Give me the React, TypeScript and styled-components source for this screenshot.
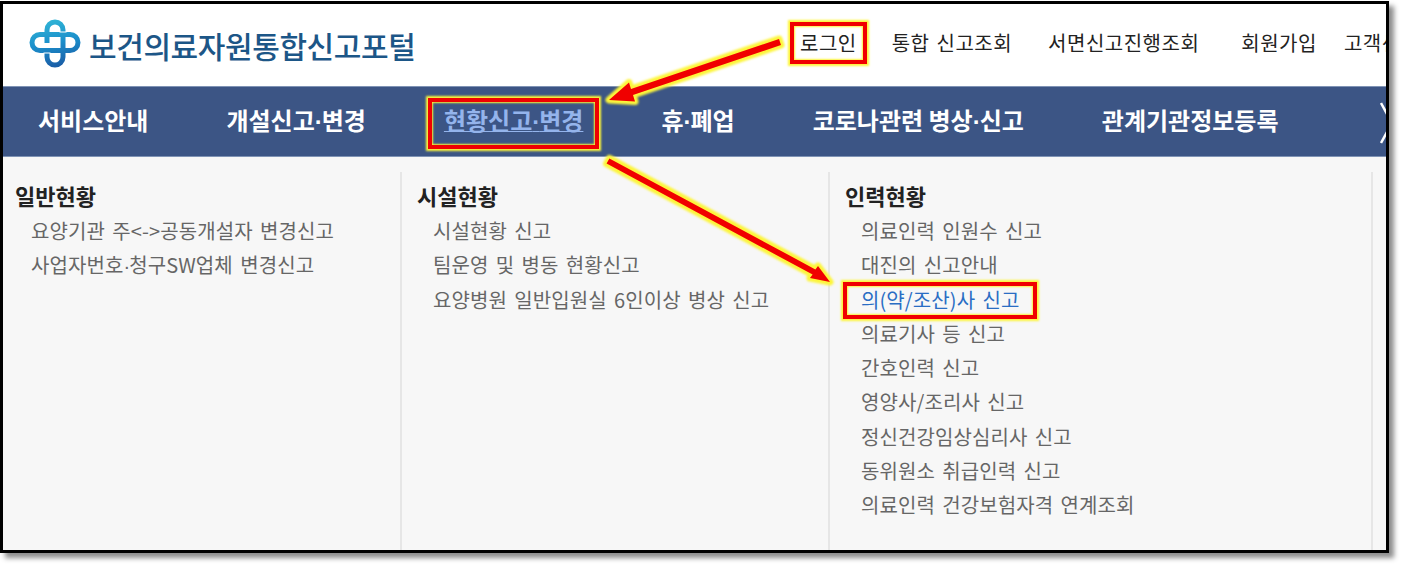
import styled, { createGlobalStyle } from 'styled-components';

const GlobalStyle = createGlobalStyle`
  html, body {
    margin: 0;
    padding: 0;
    background: #fff;
  }
  body {
    font-family: "Noto Sans CJK KR", "Noto Sans", sans-serif;
  }
`;

const Page = styled.div`
  position: relative;
  width: 1405px;
  height: 568px;
  overflow: hidden;
  padding-top: 1px;
  box-sizing: border-box;
`;

const Frame = styled.div`
  width: 1389px;
  height: 552px;
  box-sizing: border-box;
  border: 3px solid #000;
  background: #f7f7f7;
  box-shadow: 5px 5px 5px rgba(0, 0, 0, 0.45);
  overflow: hidden;
  display: flex;
  flex-direction: column;
`;

const Header = styled.header`
  height: 82px;
  flex: none;
  background: #fff;
  display: flex;
  align-items: center;
  padding-left: 26px;
  white-space: nowrap;
`;

const Logo = styled.div`
  width: 771px;
  flex: none;
  display: flex;
  align-items: center;
  gap: 8px;
`;

const LogoText = styled.span`
  font-size: 30px;
  font-weight: 500;
  letter-spacing: -0.4px;
  color: #1c5687;
`;

const TopLinks = styled.nav`
  display: flex;
  align-items: center;
  margin-top: -6px;
`;

const TopLink = styled.a<{ $left: number }>`
  position: relative;
  margin-left: ${(p) => p.$left}px;
  font-size: 20px;
  letter-spacing: 0.5px;
  word-spacing: 2px;
  color: #222;
  flex: none;
`;

const MainNav = styled.nav`
  height: 71px;
  flex: none;
  background: #3c5585;
  border-top: 1px solid #7f93b5;
  border-bottom: 1px solid #7f93b5;
  box-sizing: border-box;
  display: flex;
  align-items: center;
  gap: 78px;
  padding: 0 0 4px 35px;
  white-space: nowrap;
  position: relative;
`;

const NavItem = styled.a<{ $active?: boolean }>`
  position: relative;
  font-size: 24px;
  font-weight: 700;
  color: ${(p) => (p.$active ? '#94b4ec' : '#fff')};
  text-decoration: ${(p) => (p.$active ? 'underline' : 'none')};
  text-decoration-thickness: 1px;
  flex: none;
`;

const Dot = styled.span`
  font-family: "Liberation Sans", sans-serif;
  letter-spacing: -1px;
`;

const NavChevron = styled.svg`
  position: absolute;
  right: -8px;
  top: 15px;
`;

const Panel = styled.div`
  flex: 1;
  display: flex;
  padding-top: 15px;
  min-height: 0;
`;

const Column = styled.section<{ $width: number; $pad: number; $divider?: boolean }>`
  width: ${(p) => p.$width}px;
  flex: none;
  box-sizing: border-box;
  padding-left: ${(p) => p.$pad}px;
  padding-top: 6px;
  border-left: ${(p) => (p.$divider ? '2px solid #e6e6e6' : '0')};
`;

const LastRule = styled.div`
  width: 2px;
  background: #e6e6e6;
`;

const ColumnTitle = styled.h3`
  margin: 0 0 2px;
  font-size: 22px;
  font-weight: 700;
  line-height: 34px;
  color: #222;
`;

const ItemList = styled.ul`
  list-style: none;
  margin: 0;
  padding: 0 0 0 16px;
`;

const Item = styled.li<{ $active?: boolean }>`
  position: relative;
  width: max-content;
  font-size: 20px;
  line-height: 34.3px;
  letter-spacing: 0.1px;
  word-spacing: 2.7px;
  white-space: nowrap;
  color: ${(p) => (p.$active ? '#2a6dc4' : '#666')};
`;

const RedBox = styled.span<{ $x: number; $top: number; $bottom: number }>`
  position: absolute;
  left: -${(p) => p.$x}px;
  right: -${(p) => p.$x}px;
  top: -${(p) => p.$top}px;
  bottom: -${(p) => p.$bottom}px;
  border: 4px solid #f00000;
  box-shadow: 0 0 2px 2px #fdf53a, inset 0 0 2px 1px #fdf53a;
  pointer-events: none;
`;

const Arrows = styled.svg`
  position: absolute;
  left: 0;
  top: 0;
  pointer-events: none;
`;

const columns = [
  {
    title: '일반현황',
    width: 397,
    pad: 12,
    divider: false,
    items: ['요양기관 주<->공동개설자 변경신고', '사업자번호·청구SW업체 변경신고'],
  },
  {
    title: '시설현황',
    width: 428,
    pad: 15,
    divider: true,
    items: ['시설현황 신고', '팀운영 및 병동 현황신고', '요양병원 일반입원실 6인이상 병상 신고'],
  },
  {
    title: '인력현황',
    width: 543,
    pad: 15,
    divider: true,
    items: [
      '의료인력 인원수 신고',
      '대진의 신고안내',
      '의(약/조산)사 신고',
      '의료기사 등 신고',
      '간호인력 신고',
      '영양사/조리사 신고',
      '정신건강임상심리사 신고',
      '동위원소 취급인력 신고',
      '의료인력 건강보험자격 연계조회',
    ],
  },
];

const topLinks = [
  { label: '통합 신고조회', left: 35 },
  { label: '서면신고진행조회', left: 36 },
  { label: '회원가입', left: 42 },
  { label: '고객센터', left: 27 },
];

const withDots = (text: string) =>
  text.split('·').map((part, i) => (
    <span key={part}>
      {i > 0 && <Dot>·</Dot>}
      {part}
    </span>
  ));

const LogoMark = () => (
  <svg width="52" height="52" viewBox="0 0 52 52" fill="none">
    <defs>
      <linearGradient id="knot" gradientUnits="userSpaceOnUse" x1="0" y1="0" x2="10" y2="50">
        <stop offset="0" stopColor="#35bcd8" />
        <stop offset="0.55" stopColor="#1b8fcb" />
        <stop offset="1" stopColor="#1a5fa8" />
      </linearGradient>
    </defs>
    <rect x="3" y="15.5" width="46" height="16" rx="8" stroke="url(#knot)" strokeWidth="5" />
    <path d="M18 24 V11 a8 8 0 0 1 16 0 V38 a8 8 0 0 1 -16 0 V31.5" stroke="url(#knot)" strokeWidth="5" />
    <path d="M14.5 34 H21.5 M30.5 13 H37.5" stroke="#fff" strokeWidth="1.2" />
  </svg>
);

export default function App() {
  return (
    <>
      <GlobalStyle />
      <Page>
        <Frame>
          <Header>
            <Logo>
              <LogoMark />
              <LogoText>보건의료자원통합신고포털</LogoText>
            </Logo>
            <TopLinks>
              <TopLink $left={0}>
                로그인
                <RedBox $x={10} $top={6} $bottom={7} />
              </TopLink>
              {topLinks.map((link) => (
                <TopLink key={link.label} $left={link.left}>
                  {link.label}
                </TopLink>
              ))}
            </TopLinks>
          </Header>
          <MainNav>
            <NavItem>서비스안내</NavItem>
            <NavItem>{withDots('개설신고·변경')}</NavItem>
            <NavItem $active>
              {withDots('현황신고·변경')}
              <RedBox $x={16} $top={4} $bottom={12} />
            </NavItem>
            <NavItem>{withDots('휴·폐업')}</NavItem>
            <NavItem>{withDots('코로나관련 병상·신고')}</NavItem>
            <NavItem>관계기관정보등록</NavItem>
            <NavChevron width="14" height="42" viewBox="0 0 14 42" fill="none">
              <path d="M1 1 L12 21 L1 41" stroke="#fff" strokeWidth="2.5" />
            </NavChevron>
          </MainNav>
          <Panel>
            {columns.map((col) => (
              <Column key={col.title} $width={col.width} $pad={col.pad} $divider={col.divider}>
                <ColumnTitle>{col.title}</ColumnTitle>
                <ItemList>
                  {col.items.map((item) => (
                    <Item key={item} $active={item.startsWith('의(약')}>
                      {withDots(item)}
                      {item.startsWith('의(약') && <RedBox $x={18} $top={1} $bottom={2} />}
                    </Item>
                  ))}
                </ItemList>
              </Column>
            ))}
            <LastRule />
          </Panel>
        </Frame>
        <Arrows width="1405" height="568" viewBox="0 0 1405 568">
          <defs>
            <filter id="glow" x="-20%" y="-20%" width="140%" height="140%">
              <feGaussianBlur stdDeviation="1" />
            </filter>
            <polygon id="arrow-a" points="779,39 631,89 629,82.5 609,100 635,101.5 633,95 781,45" />
            <polygon id="arrow-b" points="609.4,158.4 815.4,269.4 818,266 830,282 810,278 812.6,274.6 606.6,163.6" />
          </defs>
          <use href="#arrow-a" fill="#fdf53a" stroke="#fdf53a" strokeWidth="7" strokeLinejoin="round" filter="url(#glow)" />
          <use href="#arrow-b" fill="#fdf53a" stroke="#fdf53a" strokeWidth="7" strokeLinejoin="round" filter="url(#glow)" />
          <use href="#arrow-a" fill="#f00000" />
          <use href="#arrow-b" fill="#f00000" />
        </Arrows>
      </Page>
    </>
  );
}
